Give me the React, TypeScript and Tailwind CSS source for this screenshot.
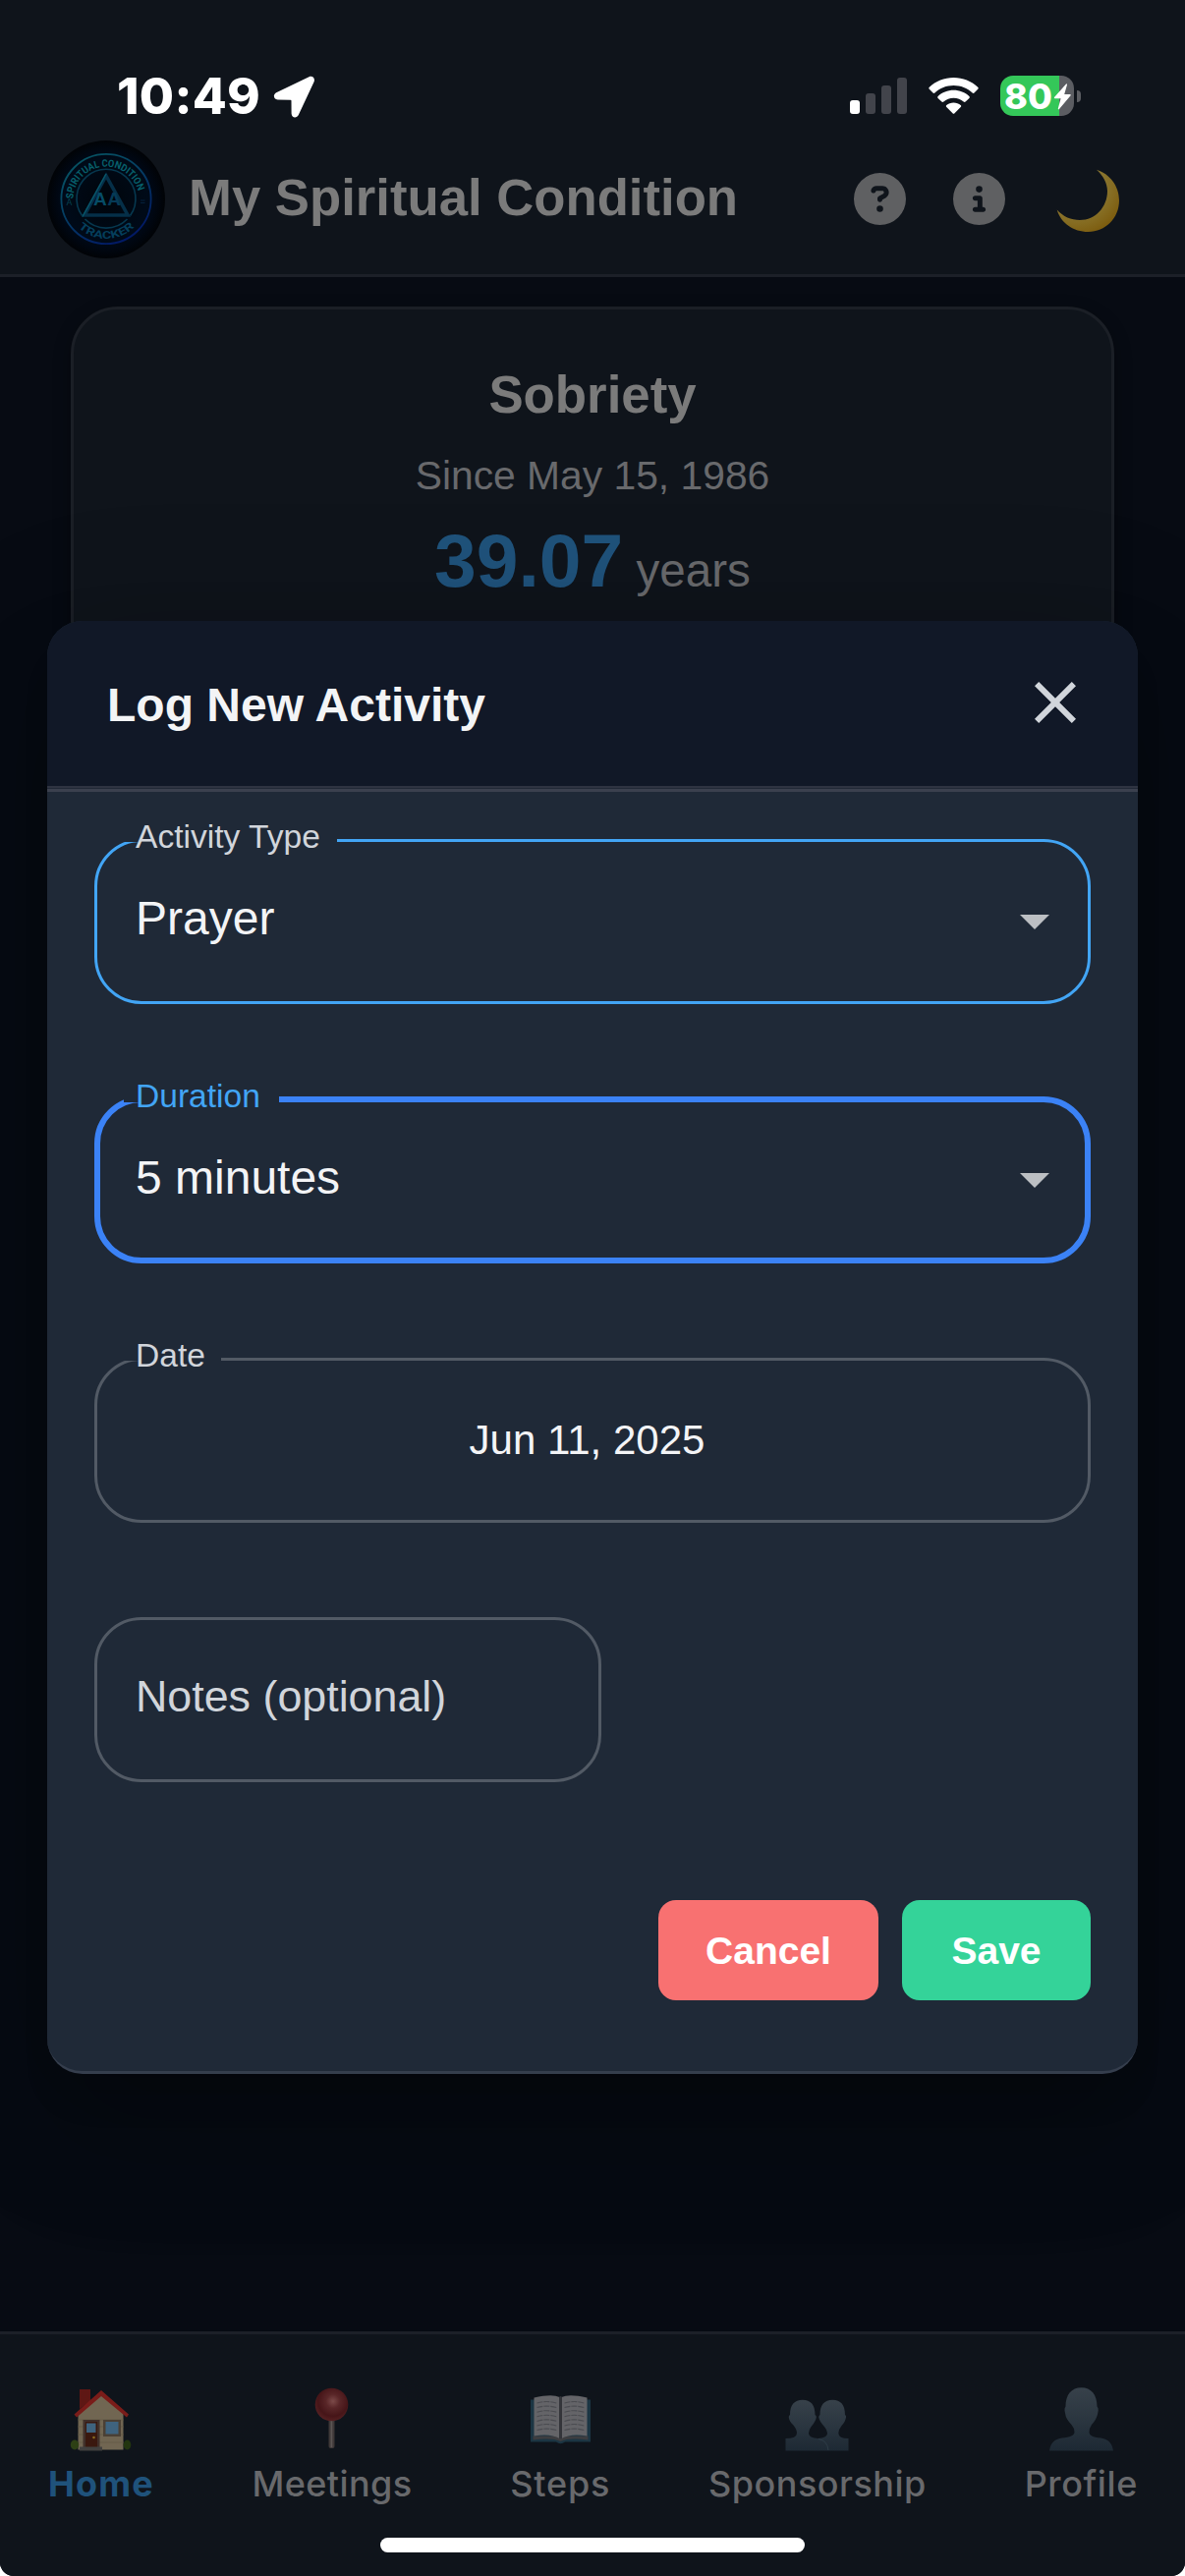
import type { ReactNode } from "react";
import { FaCircleInfo, FaCircleQuestion } from "react-icons/fa6";

const SANS = "font-['Liberation_Sans',Arial,sans-serif]";

function StatusBar() {
  return (
    <div className="flex h-[143px] shrink-0 items-start pl-[119px] pr-[106px] font-['Inter',sans-serif] text-white">
      <div className="mt-[68px] w-[147px] text-[51px] leading-[60px] font-extrabold tracking-[0.3px] whitespace-nowrap">10:49</div>
      <svg className="mt-[77px] ml-[12px] h-[43px] w-[43px]" viewBox="0 0 43 43" fill="white">
        <path d="M36.5 1.2 3.2 17.2C-.6 19.2.4 24.4 4.6 24.5L17.6 24.7C18.2 24.7 18.5 25 18.5 25.6L18.6 38.6C18.8 43.2 24 43.8 25.8 40L41.6 6.2C43 2.8 40-.4 36.5 1.2Z" />
      </svg>
      <svg className="mt-[79px] ml-auto h-[37px] w-[58px]" viewBox="0 0 58 37">
        <rect x="0" y="23" width="10" height="14" rx="3" fill="#fff" />
        <rect x="16" y="16" width="10" height="21" rx="3" fill="#42444b" />
        <rect x="32" y="8" width="10" height="29" rx="3" fill="#42444b" />
        <rect x="48" y="0" width="10" height="37" rx="3" fill="#42444b" />
      </svg>
      <svg className="mt-[79px] ml-[22px] h-[37px] w-[51px]" viewBox="0 0 51 37" fill="white">
        <path d="M25.500 0C35 0 43.600 3.500 50.200 9.700Q51.200 10.700 50.200 11.700L46.500 15.500Q45.600 16.300 44.600 15.400C39.500 10.600 32.800 7.900 25.500 7.900S11.500 10.600 6.400 15.400Q5.400 16.300 4.500 15.500L.8 11.700Q-.2 10.700.8 9.700C7.400 3.500 16 0 25.500 0Z" />
        <path d="M25.500 12.800C31.600 12.800 37.200 15.100 41.400 18.900Q42.400 19.900 41.400 20.900L37.600 24.600Q36.700 25.400 35.700 24.600C32.900 22.200 29.400 20.700 25.500 20.700S18.100 22.200 15.300 24.600Q14.300 25.400 13.400 24.600L9.600 20.900Q8.600 19.900 9.600 18.900C13.800 15.100 19.400 12.800 25.500 12.800Z" />
        <path d="M25.500 25.400C28.300 25.400 30.800 26.400 32.700 28Q33.700 28.900 32.700 29.900L26.500 36.300Q25.500 37.300 24.500 36.300L18.300 29.900Q17.300 28.900 18.300 28C20.200 26.400 22.700 25.400 25.500 25.400Z" />
      </svg>
      <div className="mt-[77px] ml-[22px] flex items-center gap-[3px]">
        <div className="relative flex h-[41px] w-[75px] items-center rounded-[13px] bg-[linear-gradient(90deg,#34c759_60px,#5b5d62_60px)] pl-[4px] text-[36px] leading-[44px] font-extrabold">
          80
          <svg className="absolute top-[8px] left-[54px] h-[27px] w-[19px]" viewBox="0 0 19 27" fill="white">
            <path d="M13 .5 1 14Q.4 15.200 1.800 15.200H7.600L4.800 25.600Q5 27 6 26L17.600 12.300Q18.200 11 16.900 11H11.200L14 1.300Q14 0 13 .5Z" />
          </svg>
        </div>
        <div className="h-[12px] w-[4px] rounded-r-full bg-[#5b5d62]" />
      </div>
    </div>
  );
}

function Logo() {
  return (
    <svg className="h-[120px] w-[120px] shrink-0" viewBox="0 0 120 120">
      <defs>
        <linearGradient id="ring" x1="0" y1="0" x2="0.6" y2="1">
          <stop offset="0" stopColor="#075a63" />
          <stop offset="0.5" stopColor="#053f63" />
          <stop offset="1" stopColor="#021a66" />
        </linearGradient>
        <radialGradient id="halo">
          <stop offset="0" stopColor="#00050b" />
          <stop offset="0.7" stopColor="#000a18" />
          <stop offset="0.82" stopColor="#000713" />
          <stop offset="1" stopColor="#010306" />
        </radialGradient>
        <path id="arcTop" d="M26.900 65.900A33.600 33.600 0 1 1 93.100 65.900" />
        <path id="arcBottom" d="M19.500 59.500A40.500 40.500 0 0 0 100.500 59.500" />
      </defs>
      <circle cx="60" cy="60" r="60" fill="url(#halo)" />
      <circle cx="60" cy="59.500" r="45.600" fill="none" stroke="url(#ring)" strokeWidth="1.800" />
      <path d="M35.500 76.500A30 30 0 1 1 84.500 76.500M38.500 80A30 30 0 0 0 81.500 80" fill="none" stroke="#06384f" strokeWidth="1.600" />
      <path d="M60 36 38 76H82Z" fill="none" stroke="#052f48" strokeWidth="3.600" />
      <path d="M60 34 36 77.500" fill="none" stroke="#08566a" strokeWidth="1.500" />
      <text x="53.800" y="65.500" textAnchor="middle" fontSize="19" fontWeight="700" fill="#064c66" fontFamily="Liberation Sans">A</text>
      <text x="68" y="65.500" textAnchor="middle" fontSize="19" fontWeight="700" fill="#053a56" fontFamily="Liberation Sans">A</text>
      <text fontSize="10.200" fontWeight="700" fill="#07606c" fontFamily="Roboto, sans-serif">
        <textPath href="#arcTop" startOffset="6.500" textLength="96" lengthAdjust="spacingAndGlyphs">SPIRITUAL CONDITION</textPath>
      </text>
      <text fontSize="10.800" fontWeight="700" fill="#053f5c" fontFamily="Roboto, sans-serif">
        <textPath href="#arcBottom" startOffset="32" textLength="63.500" lengthAdjust="spacingAndGlyphs">TRACKER</textPath>
      </text>
      <text x="19.500" y="65.500" fontSize="9" fill="#05404f" fontFamily="Roboto, sans-serif">A</text>
      <path d="M95 61h4.500M95 63.500h4.500" stroke="#04203c" strokeWidth="1.200" />
    </svg>
  );
}

function Moon() {
  return (
    <svg className="h-[65px] w-[65px]" viewBox="0 0 65 65">
      <defs>
        <radialGradient id="moonFill" cx="0.3" cy="0.25" r="0.85">
          <stop offset="0.45" stopColor="#8c7935" />
          <stop offset="0.75" stopColor="#846a1f" />
          <stop offset="1" stopColor="#7b5a0c" />
        </radialGradient>
      </defs>
      <path d="M41 .8C54.500 5 64 17.500 64 32 64 50 50 64 32.500 64 17.500 64 4.500 55 .7 41.500 7 48.500 15 52 24 52 40 52 52 38.500 52 22.500 52 14.500 47.500 6.500 41 .8Z" fill="url(#moonFill)" />
    </svg>
  );
}

function Header() {
  return (
    <header className="flex h-[139px] shrink-0 items-start border-b-[3px] border-[#1c2028] pr-[66px] pl-12">
      <Logo />
      <h1 className="mt-[28px] ml-6 text-[52.7px] leading-[60px] font-bold whitespace-nowrap text-[#7b7b7b]">My Spiritual Condition</h1>
      <FaCircleQuestion className="mt-[33px] ml-auto h-[53px] w-[53px] text-[#5f6062]" />
      <FaCircleInfo className="mt-[33px] ml-[48px] h-[53px] w-[53px] text-[#5f6062]" />
      <div className="mt-[29px] ml-[52px]">
        <Moon />
      </div>
    </header>
  );
}

function SobrietyCard() {
  return (
    <section className="mx-[72px] mt-[30px] flex h-[520px] flex-col items-center rounded-[48px] border-[3px] border-[#1b1f26] bg-[#0f141b] pt-[57px] shadow-[0_6px_18px_rgba(0,0,0,0.3)]">
      <h2 className="text-[52.8px] leading-[60px] font-bold text-[#7b7b7b]">Sobriety</h2>
      <p className="mt-[28px] text-[40.8px] leading-[48px] text-[#68696c]">Since May 15, 1986</p>
      <p className="mt-[22px] text-[47.6px] leading-[80px] text-[#68696c]">
        <span className="text-[76.8px] font-bold text-[#1f527b]">39.07</span> years
      </p>
      <div className="mt-[21px] ml-[100px] h-px w-[5px] bg-[#1f527b]" />
    </section>
  );
}

function Caret() {
  return (
    <svg className="ml-auto h-[72px] w-[72px] -translate-y-px" viewBox="0 0 24 24" fill="#bcbfc3">
      <path d="M7 10l5 5 5-5z" />
    </svg>
  );
}

interface OutlinedFieldProps {
  label?: string;
  labelClass?: string;
  boxClass: string;
  gapClass?: string;
  children: ReactNode;
}

function OutlinedField({ label, labelClass, boxClass, gapClass, children }: OutlinedFieldProps) {
  return (
    <div className={`relative flex items-center rounded-[48px] ${boxClass}`}>
      {label && <span className={`absolute bg-[#1f2937] ${gapClass}`} />}
      {label && <span className={`absolute text-[33.6px] leading-[40px] whitespace-nowrap ${labelClass}`}>{label}</span>}
      {children}
    </div>
  );
}

function ActivityModal() {
  return (
    <div className="absolute top-[632px] left-12 flex h-[1479px] w-[1110px] flex-col overflow-hidden rounded-[36px] border-b-[3px] border-[#353e4d] bg-[#1f2937]">
      <div className="flex h-[168px] items-center justify-between bg-[#111827] pr-[48px] pl-[61px]">
        <h2 className="mt-[3px] text-[48px] leading-[60px] font-bold text-[#f3f4f6]">Log New Activity</h2>
        <svg className="-mt-[2px] h-[72px] w-[72px]" viewBox="0 0 24 24" fill="#d1d5db">
          <path d="M19 6.410L17.590 5 12 10.590 6.410 5 5 6.410 10.590 12 5 17.590 6.410 19 12 13.410 17.590 19 19 17.590 13.410 12z" />
        </svg>
      </div>
      <div className="h-[2px] bg-[#2f3442]" />
      <div className="h-px bg-[#222937]" />
      <div className="h-[3px] bg-[#3b404e]" />
      <div className="flex flex-col px-12 pt-12">
        <OutlinedField label="Activity Type" labelClass="-top-[25px] left-[39px] text-[#d1d5db]" gapClass="-top-[3px] left-[27px] h-[3px] w-[217px]" boxClass="h-[168px] border-[3px] border-[#42a5f5] pl-[39px] pr-[18px]">
          <span className="pb-[7px] text-[48px] leading-[56px] text-[#f3f4f6]">Prayer</span>
          <Caret />
        </OutlinedField>
        <OutlinedField label="Duration" labelClass="-top-[26px] left-[36px] text-[#42a5f5]" gapClass="-top-[6px] left-[24px] h-[6px] w-[158px]" boxClass="mt-[94px] h-[170px] border-[6px] border-[#3b82f6] pl-[36px] pr-[15px]">
          <span className="pb-[5px] text-[48px] leading-[56px] text-[#f3f4f6]">5 minutes</span>
          <Caret />
        </OutlinedField>
        <OutlinedField label="Date" labelClass="-top-[25px] left-[39px] text-[#d1d5db]" gapClass="-top-[3px] left-[27px] h-[3px] w-[99px]" boxClass="mt-24 h-[168px] justify-center border-[3px] border-[#525a65] pr-[11px]">
          <span className="text-[42px] leading-[50px] text-[#f3f4f6]">Jun 11, 2025</span>
        </OutlinedField>
        <OutlinedField boxClass="mt-24 h-[168px] w-[516px] border-[3px] border-[#525a65] pl-[39px]">
          <span className="pb-[8px] text-[44.8px] leading-[52px] text-[#d1d5db]">Notes (optional)</span>
        </OutlinedField>
        <div className="mt-[120px] flex justify-end gap-6 text-[39px] font-bold text-white">
          <button className="h-[102px] w-[224px] rounded-[18px] bg-[#f87171] pt-[3px]">Cancel</button>
          <button className="h-[102px] w-[192px] rounded-[18px] bg-[#34d399] pt-[3px]">Save</button>
        </div>
      </div>
    </div>
  );
}

function House() {
  return (
    <svg className="h-[65px] w-[65px]" viewBox="0 0 65 65">
      <path d="M11 2H22V14L11 22Z" fill="#5e1714" />
      <path d="M9.500 25 32.500 6 55.500 25V63.500H9.500Z" fill="#716652" />
      <path d="M9.500 33H55.500M9.500 40H55.500M9.500 48H55.500M9.500 56H55.500" stroke="#675c49" strokeWidth="1" />
      <path d="M33 3 61 27.500 59 30.500 33 9 8 30.500 5.500 27.500Z" fill="#7a1c19" />
      <rect x="14.500" y="33" width="17" height="28" fill="#40302a" />
      <rect x="17" y="35" width="12" height="26" fill="#3a180f" />
      <rect x="18" y="36.500" width="9.500" height="9.500" fill="#3f637e" />
      <circle cx="25.500" cy="51" r="1.300" fill="#8a6a20" />
      <rect x="35" y="33" width="18" height="17" fill="#4b4034" />
      <rect x="37.500" y="35" width="13" height="12.500" fill="#3f637e" />
      <rect x="11" y="60.500" width="23" height="4" fill="#41403f" />
      <ellipse cx="6" cy="58.500" rx="4.200" ry="5" fill="#2d4015" />
      <ellipse cx="59.500" cy="58.500" rx="3.800" ry="5" fill="#22350f" />
    </svg>
  );
}

function Pin() {
  return (
    <svg className="h-[65px] w-[65px]" viewBox="0 0 65 65">
      <defs>
        <radialGradient id="pinHead" cx="0.54" cy="0.4" r="0.6">
          <stop offset="0" stopColor="#7c4a49" />
          <stop offset="0.35" stopColor="#592628" />
          <stop offset="0.75" stopColor="#461518" />
          <stop offset="1" stopColor="#552022" />
        </radialGradient>
      </defs>
      <rect x="29.500" y="32" width="6" height="30" rx="2" fill="#3f3938" />
      <rect x="31.500" y="32" width="1.800" height="29" fill="#5b5553" />
      <circle cx="32.500" cy="17.500" r="16.800" fill="url(#pinHead)" />
    </svg>
  );
}

function Book() {
  const rows = [0, 1, 2, 3, 4, 5, 6];
  return (
    <svg className="h-[65px] w-[65px]" viewBox="0 0 65 65">
      <path d="M2 12.500H63V55.500H37Q32.500 59 28 55.500H2Z" fill="#1b3543" />
      <path d="M4.500 49.500V53.500Q24 51 32.500 55 41 51 60.500 53.500V49.500Z" fill="#3d3d40" />
      <path d="M5.500 10.500Q24 6.500 31.500 10V52Q22 46.500 5.500 49.500Z" fill="#646468" />
      <path d="M33.500 10Q41 6.500 59.500 10.500V49.500Q43 46.500 33.500 52Z" fill="#646468" />
      <path d="M31 10V52H34V10Q32.500 8 31 10Z" fill="#34353a" />
      {rows.map((r) => (
        <path key={r} d={`M8.500 ${16 + r * 4.6}Q18 ${13 + r * 4.6} 28.500 ${16 + r * 4.6}M36.500 ${16 + r * 4.6}Q46 ${13 + r * 4.6} 56.500 ${16 + r * 4.6}`} stroke="#4b4c51" strokeWidth="1.100" strokeDasharray="6 1" fill="none" />
      ))}
    </svg>
  );
}

function SilhouetteFill({ id }: { id: string }) {
  return (
    <linearGradient id={id} x1="0" y1="0" x2="0" y2="1">
      <stop offset="0" stopColor="#37414a" />
      <stop offset="0.5" stopColor="#2b3640" />
      <stop offset="1" stopColor="#1d2934" />
    </linearGradient>
  );
}

function People() {
  return (
    <svg className="h-[65px] w-[65px]" viewBox="0 0 65 65">
      <defs>
        <SilhouetteFill id="people" />
      </defs>
      <path d="M.5 64.500V52Q12 52 12 46.500 12 43 8.500 38.500C5.500 36 4 33 3.800 30.500Q3.600 28.500 5 28C5 18 9.500 12.800 17.800 12.800S30.500 18 30.500 28Q32 28.500 31.800 30.500C31.500 33 29 37.500 26.500 40Q24 43.500 24 46.500C24 50 28 51.700 33.500 52 39 51.700 43 50 43 46.500Q43 43.500 40 40C37 37 34.500 33 34.300 30.500Q34.200 28.500 35.500 28C35.500 18 40 12.800 48.300 12.800S61 18 61 28Q62.500 28.500 62 30.500C61.500 33.500 60 36.500 57.500 39Q54.300 43 54.300 46.500 54.300 52 64.500 52V64.500Z" fill="url(#people)" />
      <path d="M34 52.500Q43 54 44 64" fill="none" stroke="#2d3c47" strokeWidth="1" />
    </svg>
  );
}

function Person() {
  return (
    <svg className="h-[65px] w-[65px]" viewBox="0 0 65 65">
      <defs>
        <SilhouetteFill id="person" />
      </defs>
      <path d="M0 64.500C1.500 55.500 6 52.500 13 51.500 21 50.700 25.500 49 25.500 45.500Q25.500 41.500 22.500 38C19 34.500 16.500 30.500 16.300 27.500L15.500 23.500Q15.300 21 16.500 19.500C16.500 7.500 22.500.3 32.500.3S48.500 7.500 48.500 19.500Q50 21 49.700 23.500L49 27.500C48 31.500 46 34.500 43 38Q40.500 41.500 40.500 45.500C40.500 49 44 50.700 52 51.500 59 52.500 63.500 55.500 65 64.500Z" fill="url(#person)" />
    </svg>
  );
}

const tabs = [
  { label: "Home", icon: <House />, style: "font-bold tracking-[1.1px] text-[#1f527b]" },
  { label: "Meetings", icon: <Pin />, style: "font-medium tracking-[0.4px] text-[#68696c]" },
  { label: "Steps", icon: <Book />, style: "font-medium tracking-[0.8px] text-[#68696c]" },
  { label: "Sponsorship", icon: <People />, style: "font-medium tracking-[0.5px] text-[#68696c]" },
  { label: "Profile", icon: <Person />, style: "font-medium tracking-[0.6px] text-[#68696c]" },
];

function BottomNav() {
  return (
    <nav className="relative flex h-[249px] shrink-0 items-start justify-between border-t-[3px] border-[#1c2028] bg-[#0f141b] pr-[48px] pl-[49px] pt-[54px] font-['Inter',sans-serif]">
      {tabs.map((t) => (
        <div key={t.label} className="flex flex-col items-center">
          {t.icon}
          <span className={`mt-[11px] text-[36px] leading-[44px] ${t.style}`}>{t.label}</span>
        </div>
      ))}
      <div className="absolute bottom-[24px] left-[387px] h-[15px] w-[432px] rounded-full bg-white" />
    </nav>
  );
}

export default function App() {
  return (
    <div className={`relative flex h-[2622px] w-[1206px] flex-col overflow-hidden rounded-b-[14px] bg-[#070b13] ${SANS}`}>
      <div className="flex shrink-0 flex-col bg-[#0f141b]">
        <StatusBar />
        <Header />
      </div>
      <main className="flex-1">
        <SobrietyCard />
      </main>
      <BottomNav />
      <div className="pointer-events-none absolute top-[632px] left-12 h-[1479px] w-[1110px] rounded-[36px] shadow-[0_33px_45px_-21px_rgba(0,0,0,0.2),0_72px_114px_9px_rgba(0,0,0,0.14),0_27px_138px_24px_rgba(0,0,0,0.12)]" />
      <ActivityModal />
    </div>
  );
}
